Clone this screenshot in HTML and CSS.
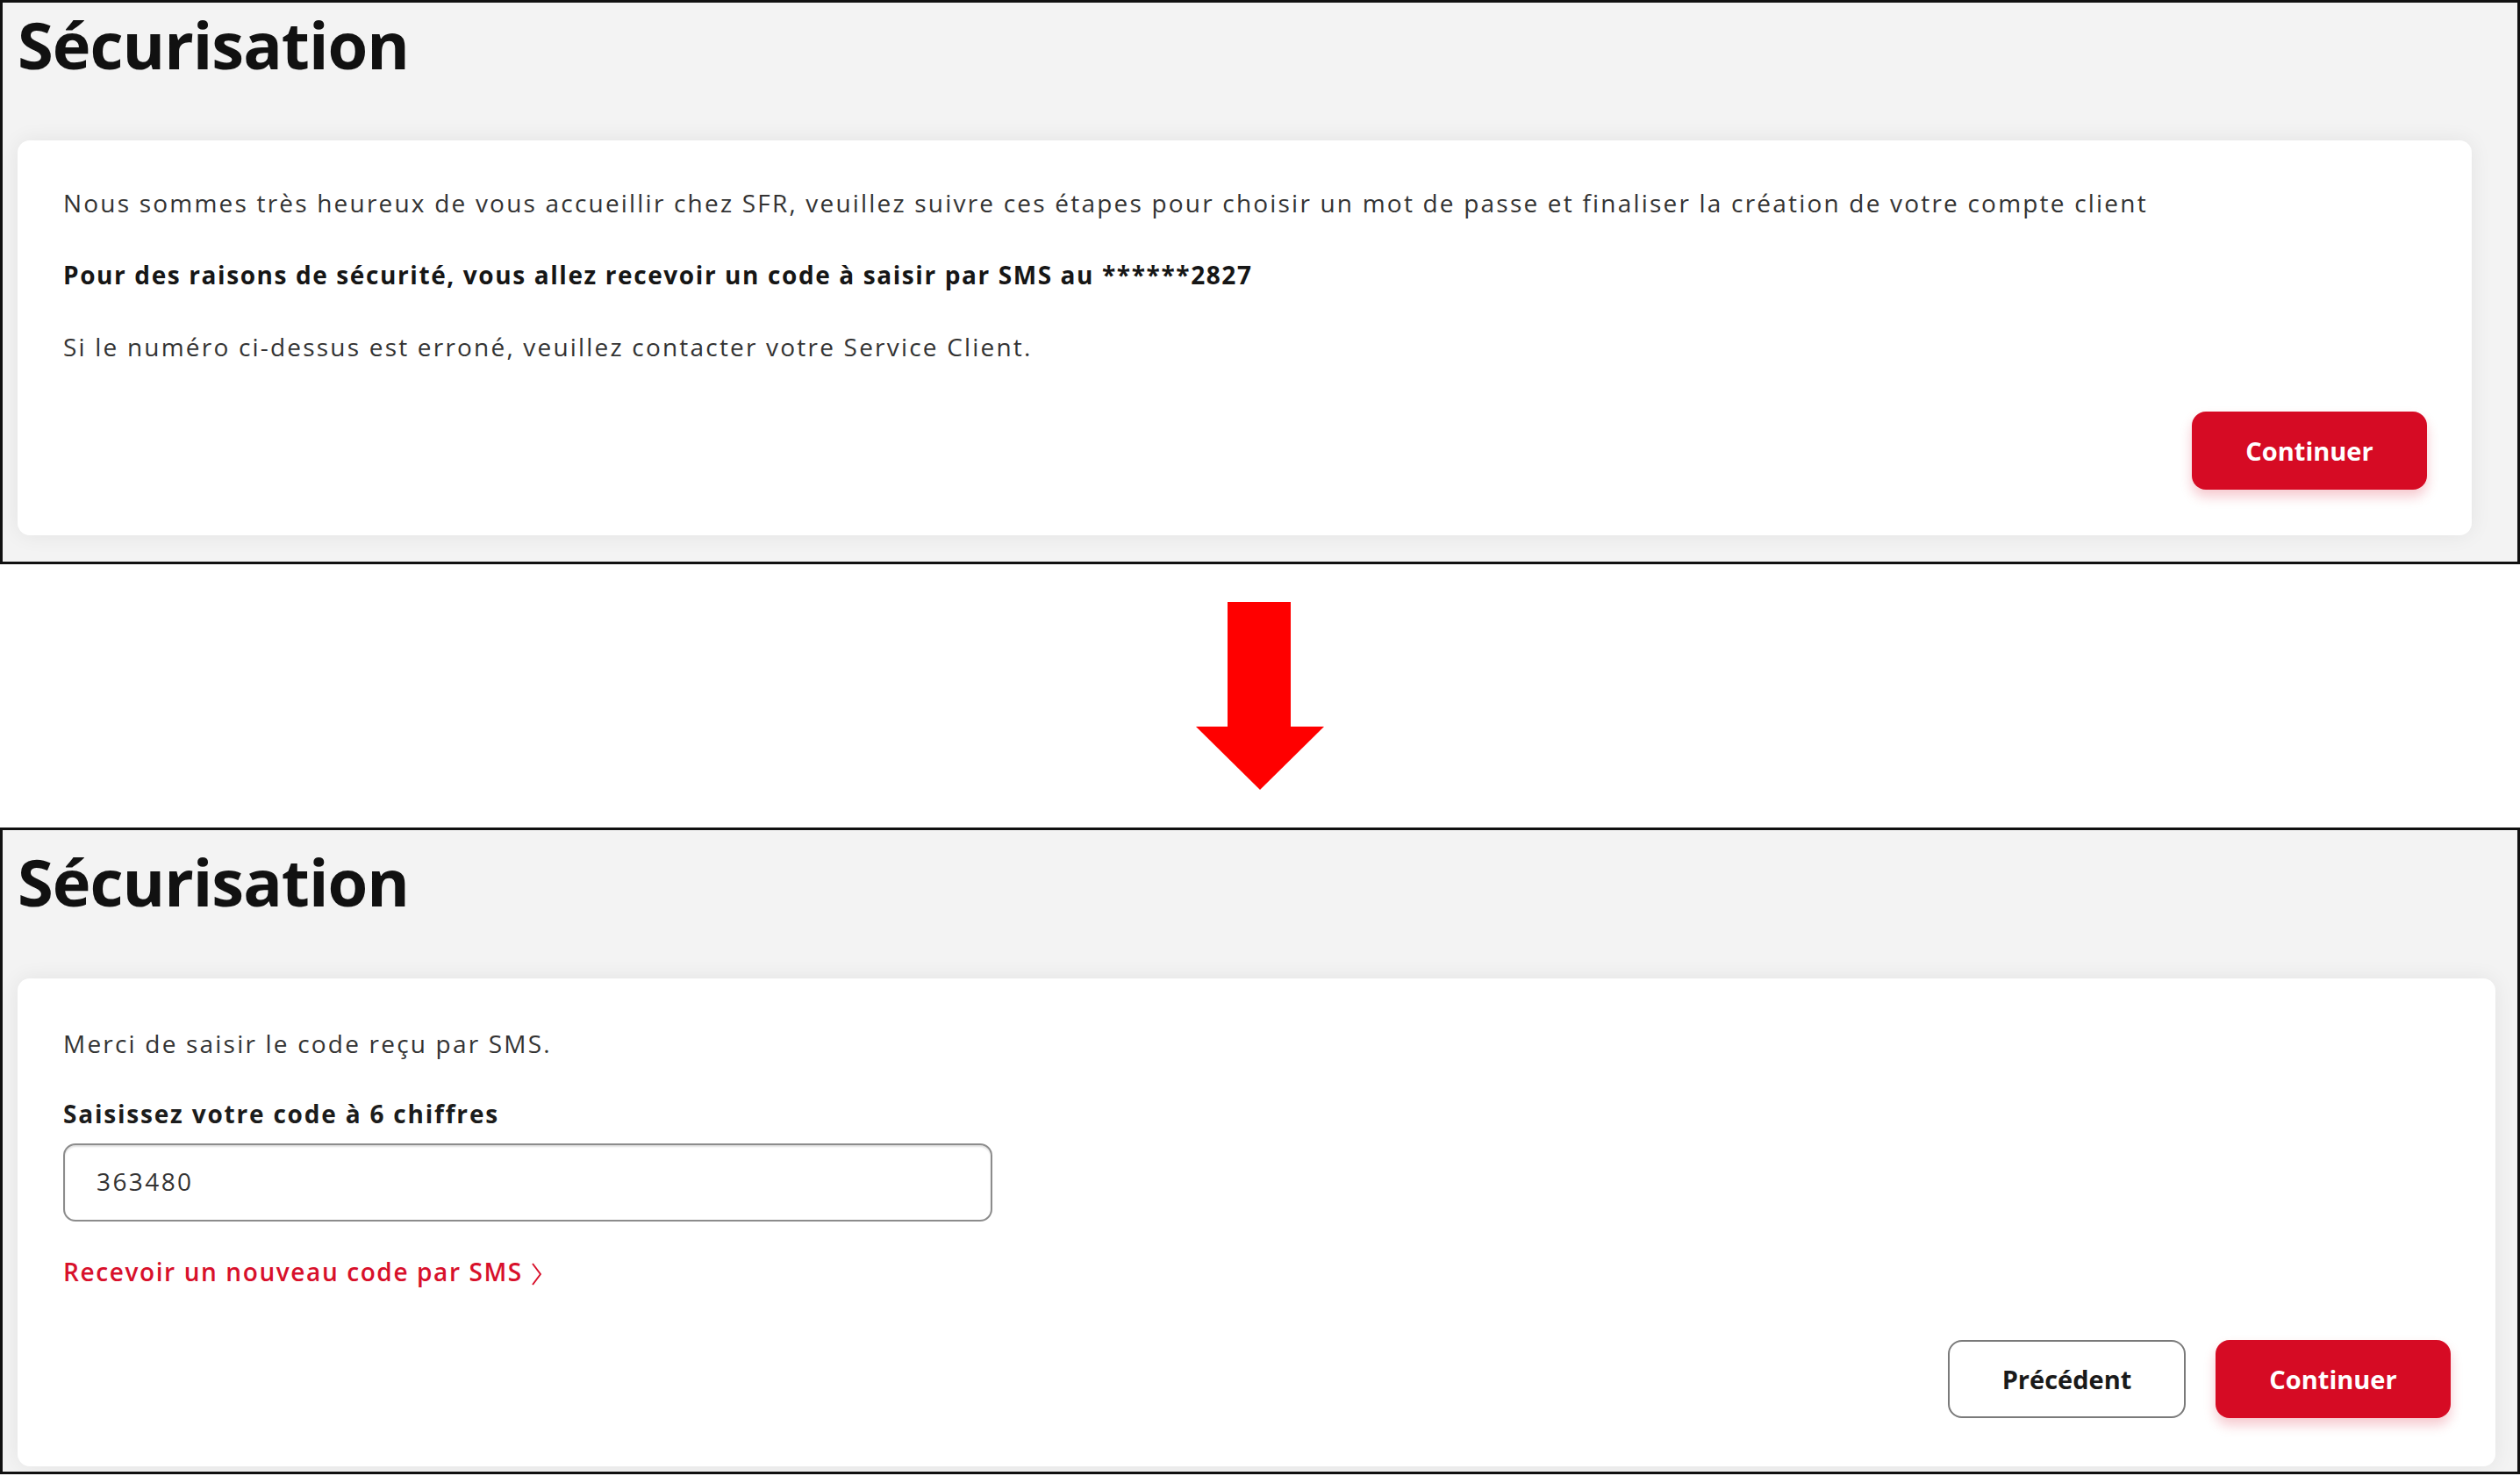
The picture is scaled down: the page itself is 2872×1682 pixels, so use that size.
FILE: index.html
```html
<!DOCTYPE html>
<html lang="fr">
<head>
    <title>Sécurisation - étapes</title>
    <meta charset="utf-8">
    <link rel="stylesheet" href="styles.css">
</head>
<body>
    <!-- Etape 1 : annonce du SMS -->
    <div class="shot shot-first">
        <h1 class="title">Sécurisation</h1>
        <div class="card">
            <p class="text">Nous sommes très heureux de vous accueillir chez SFR, veuillez suivre ces étapes pour choisir un mot de passe et finaliser la création de votre compte client</p>
            <p class="text text-strong">Pour des raisons de sécurité, vous allez recevoir un code à saisir par SMS au ******2827</p>
            <p class="text">Si le numéro ci-dessus est erroné, veuillez contacter votre Service Client.</p>
            <div class="actions">
                <button class="btn btn-primary">Continuer</button>
            </div>
        </div>
    </div>

    <div class="arrow">
        <svg width="146" height="214" viewBox="0 0 146 214">
            <rect x="36" y="0" width="72" height="143" fill="#ff0000"/>
            <polygon points="0,142 146,142 73,214" fill="#ff0000"/>
        </svg>
    </div>

    <!-- Etape 2 : saisie du code -->
    <div class="shot shot-second">
        <h1 class="title">Sécurisation</h1>
        <div class="card card-code">
            <p class="text">Merci de saisir le code reçu par SMS.</p>
            <label class="field-label" for="code">Saisissez votre code à 6 chiffres</label>
            <input class="code-input" id="code" type="text" value="363480">
            <a class="resend" href="#">Recevoir un nouveau code par SMS
                <svg class="chevron" width="12" height="28" viewBox="0 0 12 28">
                    <polyline points="2,2 11,14 2,26" fill="none" stroke="#d8102b" stroke-width="2"/>
                </svg>
            </a>
            <div class="actions actions-code">
                <button class="btn btn-secondary">Précédent</button>
                <button class="btn btn-primary">Continuer</button>
            </div>
        </div>
    </div>
</body>
</html>
```

FILE: styles.css
```css
body {
    margin: 0;
    background-color: #ffffff;
    font-family: 'Open Sans', sans-serif;
    color: #333333;
}
.shot {
    box-sizing: border-box;
    width: 2872px;
    border: 3px solid #111111;
    background-color: #f3f3f3;
}
.shot-first {
    height: 643px;
    padding: 0 52px 0 17px;
}
.shot-second {
    height: 737px;
    padding: 0 25px 0 17px;
}
.title {
    margin: 11px 0 72px 0;
    font-size: 74px;
    line-height: 74px;
    font-weight: 700;
    color: #111111;
    letter-spacing: -1px;
}
.shot-second .title {
    margin: 22px 0 73px 0;
}
.card {
    background-color: #ffffff;
    border-radius: 14px;
    box-shadow: 0 0 24px rgba(0, 0, 0, 0.07);
    padding: 51px 51px 52px 52px;
}
.card-code {
    padding-top: 54px;
    padding-bottom: 55px;
}
.text {
    margin: 0 0 42px 0;
    font-size: 28px;
    line-height: 40px;
    letter-spacing: 2.2px;
    color: #333333;
}
.text-strong {
    font-weight: 700;
    letter-spacing: 1.6px;
    color: #161616;
}
.card-code .text {
    margin-bottom: 40px;
}
.field-label {
    display: block;
    font-size: 28px;
    line-height: 40px;
    font-weight: 700;
    letter-spacing: 1.8px;
    color: #1c1c1c;
    margin-bottom: 14px;
}
.code-input {
    display: block;
    box-sizing: border-box;
    width: 1059px;
    height: 89px;
    padding: 0 36px 4px 36px;
    border: 2px solid #8c8c8c;
    border-radius: 14px;
    box-shadow: inset 0 2px 2px rgba(0, 0, 0, 0.12);
    font-family: 'Open Sans', sans-serif;
    font-size: 28px;
    letter-spacing: 2.4px;
    color: #333333;
    outline: none;
}
.resend {
    display: inline-flex;
    align-items: center;
    gap: 9px;
    margin-top: 37px;
    font-size: 28px;
    line-height: 40px;
    font-weight: 600;
    letter-spacing: 1.6px;
    color: #d8102b;
    text-decoration: none;
}
.chevron {
    position: relative;
    top: 3px;
}
.actions {
    display: flex;
    justify-content: flex-end;
    gap: 34px;
    margin-top: 54px;
}
.actions-code {
    margin-top: 58px;
}
.btn {
    box-sizing: border-box;
    width: 268px;
    height: 89px;
    border-radius: 16px;
    font-family: 'Open Sans', sans-serif;
    font-size: 29px;
    font-weight: 700;
}
.btn-primary {
    background-color: #d60b24;
    color: #ffffff;
    border: none;
    box-shadow: 0 8px 14px rgba(214, 11, 36, 0.22);
}
.btn-secondary {
    width: 271px;
    background-color: #ffffff;
    color: #1a1a1a;
    border: 2px solid #7a7a7a;
}
.arrow {
    display: flex;
    justify-content: center;
    padding: 43px 0 43px 0;
}
.arrow svg {
    display: block;
}
```
